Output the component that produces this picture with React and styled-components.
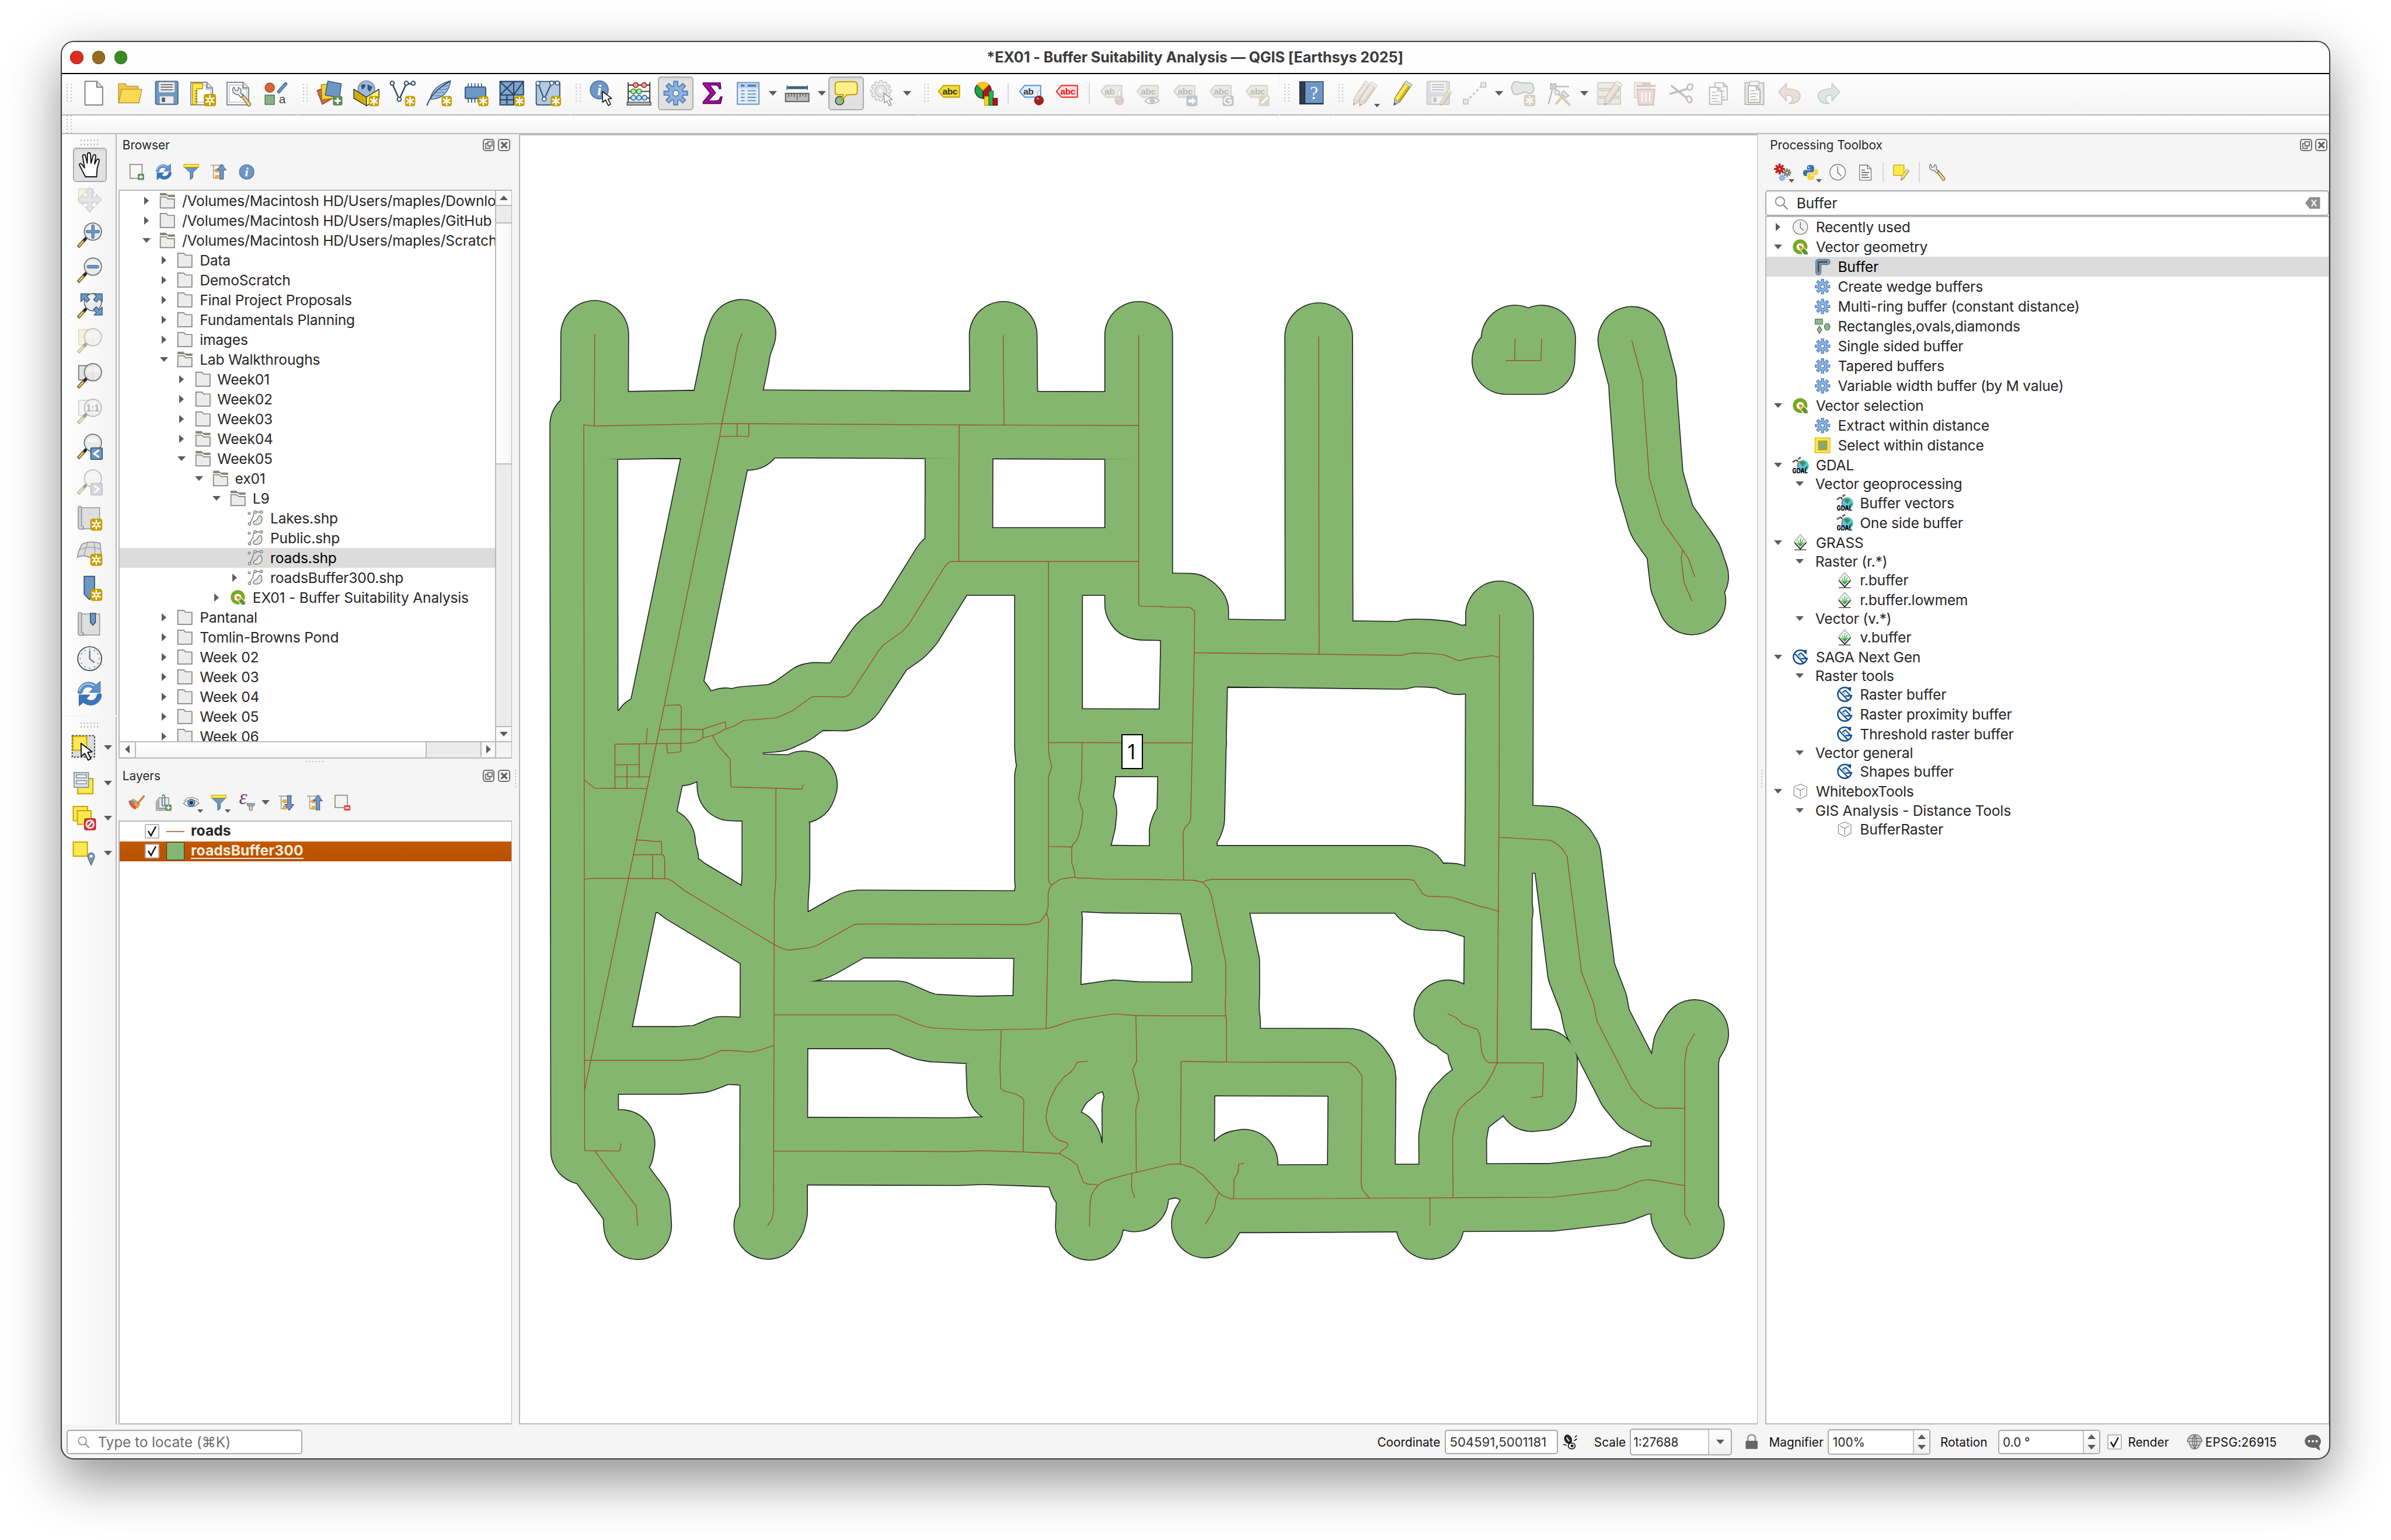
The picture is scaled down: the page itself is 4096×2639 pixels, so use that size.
import React from 'react';
import styled, { createGlobalStyle, css } from 'styled-components';

/* One unit is a tenth of a rem; the root font size ties the rem to the window width. */
const u = (n) => `${n / 10}rem`;

const C = {
  panel: '#f5f5f5',
  line: '#b9b9b9',
  ink: '#262626',
  blue: '#6d97c4',
  blueDark: '#415a75',
  yellow: '#fce94f',
  gold: '#c4a000',
  orange: '#bf5600',
};

const GlobalStyle = createGlobalStyle`
  *, *::before, *::after { box-sizing: border-box; }
  html { font-size: calc(100vw / 433.6); }
  body {
    margin: 0;
    background: #fff;
    color: ${C.ink};
    font-family: Inter, 'Liberation Sans', sans-serif;
    font-size: ${u(26)};
    letter-spacing: -0.007em;
    overflow: hidden;
  }
`;

/* ------------------------------------------------------------------ */
/* Icons, all drawn on a 24 x 24 grid                                  */
/* ------------------------------------------------------------------ */

const gear = (cx, cy, ro, ri, n, w = 0.3) => {
  const p = [];
  for (let i = 0; i < n; i++) {
    const a = (i / n) * Math.PI * 2 - Math.PI / 2;
    const s = (Math.PI * 2) / n;
    [[-s * w * 1.15, ri], [-s * w * 0.72, ro], [s * w * 0.72, ro], [s * w * 1.15, ri]].forEach(([d, r]) =>
      p.push(`${(cx + Math.cos(a + d) * r).toFixed(2)},${(cy + Math.sin(a + d) * r).toFixed(2)}`)
    );
  }
  return `M${p.join('L')}Z`;
};

const Gear = ({ cx = 12, cy = 12, ro = 10.8, ri = 6.8, n = 8, hole = 2.6, fill = '#8fb0db', stroke = '#4f7fbf', sw = 1, inner = '#fff' }) => (
  <g>
    <path d={gear(cx, cy, ro, ri, n)} fill={fill} stroke={stroke} strokeWidth={sw} strokeLinejoin="round" />
    <circle cx={cx} cy={cy} r={hole} fill={inner} stroke={stroke} strokeWidth={sw} />
  </g>
);

const spokes = (cx, cy, r, n) =>
  Array.from({ length: n }, (_, i) => {
    const a = (i / n) * Math.PI * 2 - Math.PI / 2;
    return `M${cx},${cy}L${(cx + Math.cos(a) * r).toFixed(2)},${(cy + Math.sin(a) * r).toFixed(2)}`;
  }).join('');

const Star = ({ x = 14, y = 14, s = 9.5, ring }) => {
  const cx = x + s / 2;
  const cy = y + s / 2;
  return (
    <g>
      <rect x={x} y={y} width={s} height={s} rx="1.8" fill="#c9a200" stroke="#b08f00" strokeWidth=".4" />
      <path d={spokes(cx, cy, s * 0.38, 6)} stroke="#fff" strokeWidth="1.3" strokeLinecap="round" />
      {ring && <circle cx={cx} cy={cy} r="1.6" fill="#c9a200" stroke="#fff" strokeWidth=".9" />}
    </g>
  );
};

const PlusBadge = ({ x = 15, y = 14.6, s = 8.6 }) => (
  <g>
    <rect x={x} y={y} width={s} height={s} rx="1.6" fill="#5a8c5a" />
    <path d={`M${x + s / 2},${y + s * 0.18}V${y + s * 0.82}M${x + s * 0.18},${y + s / 2}H${x + s * 0.82}`} stroke="#fff" strokeWidth={s * 0.19} />
  </g>
);

const Cursor = ({ x = 0, y = 0, k = 1 }) => (
  <path transform={`translate(${x} ${y}) scale(${k})`} d="M0,0 L.3,10.6 L3,8.2 L5.8,13.6 L8,12.4 L5.4,7.3 L9,6.8 Z" fill="#fff" stroke="#111" strokeWidth=".9" strokeLinejoin="round" />
);

const Lens = ({ back, children }) => (
  <g>
    {back}
    <path d="M8.4,14.8 L1.4,22.4" stroke="#555" strokeWidth="3" strokeLinecap="butt" />
    <path d="M6.2,17.2 L2,21.8" stroke="#f4c430" strokeWidth="1.6" />
    <path d="M9.2,13.8 L7,16.3" stroke="#222" strokeWidth="2.4" />
    <circle cx="14.9" cy="8.4" r="7.8" fill="#e6e7e7" fillOpacity=".85" stroke="#6e6e6e" strokeWidth=".9" />
    <path d="M9,7.6 A6.2,6 0 0 1 20.8,7.4 Q15,9.8 9,7.6Z" fill="#fff" opacity=".45" />
    {children}
  </g>
);

const Page = ({ x = 4, y = 1.3, w = 16, h = 21.4, f = 5.3, fill = '#fff', stroke = '#727272' }) => (
  <g fill={fill} stroke={stroke} strokeWidth=".9" strokeLinejoin="round">
    <path d={`M${x},${y}h${w - f}l${f},${f}v${h - f}h${-w}z`} />
    <path d={`M${x + w - f},${y}v${f}h${f}`} fill="#ddd" />
  </g>
);

const Pencil = ({ c1 = '#fce94f', c2 = '#c9b020', x = 0, y = 0, k = 1, tip = '#444' }) => (
  <g transform={`translate(${x} ${y}) scale(${k})`} strokeLinejoin="round">
    <path d="M15.6,1 L21,4.4 L10,20 L4.8,22.9 L5.2,17 Z" fill={c2} stroke="#857320" strokeWidth=".6" />
    <path d="M14.7,3.6 L17.6,5.3 L8,19.2 L5.4,17.2 Z" fill={c1} />
    <path d="M15.6,1 L21,4.4 L19.6,6.5 L14.2,3.2Z" fill="#d8dde0" stroke="#999" strokeWidth=".4" />
    <path d="M5.2,17 L10,20 L4.8,22.9Z" fill="#bbb" stroke="#888" strokeWidth=".4" />
    <path d="M4.9,20.6 L7,21.7 L4.8,22.9Z" fill={tip} />
  </g>
);

const textPage = (x, y, k = 1) => (
  <g transform={`translate(${x} ${y}) scale(${k})`}>
    <path d="M0,0h7.5l3.5,3.5v12h-11z" fill="#fff" stroke="#666" strokeWidth="1" />
    <path d="M7.5,0v3.5h3.5" fill="none" stroke="#666" strokeWidth="1" />
    <path d="M2,4.5h4M2,7.5h7M2,10.3h5M2,13h7" stroke="#777" strokeWidth=".9" />
  </g>
);

const Tag = ({ fill, stroke, color = '#333', txt = 'abc', x = 12.8 }) => (
  <g>
    <path d="M2.5,10.5 L7,5 H21.6 V15.6 H7Z" fill={fill} stroke={stroke} strokeWidth="1" strokeLinejoin="round" />
    <text x={x} y="13.2" textAnchor="middle" fontSize="8.2" fontWeight="600" letterSpacing="-.2" fill={color}>{txt}</text>
  </g>
);

const GreyTag = ({ txt }) => <Tag fill="#dcdccf" stroke="#aaaa9c" color="#777" txt={txt} x={txt === 'ab' ? 10.6 : 12.8} />;

const Pin = ({ color = '#a02020', x = 16.6 }) => (
  <g>
    <rect x={x - 1.1} y="9.6" width="2.2" height="6" rx="1" fill="#fff" stroke="#999" strokeWidth=".5" />
    <circle cx={x} cy="18.6" r="4.4" fill={color} />
    <ellipse cx={x - 1} cy="17" rx="1.3" ry=".9" fill="#fff" opacity=".45" />
  </g>
);

const Floppy = ({ c = C.blue, edge = '#3f5f8a' }) => (
  <g>
    <rect x="1.8" y="1.2" width="20.4" height="21" rx="1.6" fill={c} stroke={edge} strokeWidth=".8" />
    <rect x="4.8" y="2" width="14.4" height="9.2" rx=".8" fill="#eee" stroke="#aaa" strokeWidth=".5" />
    <path d="M6.5,4.3h11M6.5,6.6h11M6.5,8.9h11" stroke="#666" strokeWidth=".9" />
    <rect x="5.4" y="14.6" width="13" height="7" rx=".8" fill="#ededed" stroke="#999" strokeWidth=".6" />
    <rect x="7.5" y="16" width="3" height="4" fill={edge} />
  </g>
);

const Refresh = () => (
  <g stroke="#2d5f9e" strokeWidth=".5" strokeLinejoin="round">
    <path d="M1.3,11.2 C1.3,3.5 10.5,-1.6 17.8,4 L21.6,.9 V10.8 H11.8 L15,7.4 C10.5,4 6,6.4 5.2,11.2 C4,12.4 2.4,12.3 1.3,11.2Z" fill="#5f92cf" />
    <path d="M22.7,12.8 C22.7,20.5 13.5,25.6 6.2,20 L2.4,23.1 V13.2 H12.2 L9,16.6 C13.5,20 18,17.6 18.8,12.8 C20,11.6 21.6,11.7 22.7,12.8Z" fill="#3a75bb" />
    <path d="M2.4,9.6 C4,4 10,.8 16.2,5" fill="none" stroke="#b7d0ec" strokeWidth="1" />
  </g>
);

const Funnel = () => (
  <g>
    <path d="M2.6,5.6 H21.4 L14.2,13.2 V20 L10.6,22.8 V13.2Z" fill={C.blue} stroke={C.blueDark} strokeWidth=".8" strokeLinejoin="round" />
    <rect x="1.6" y="1.2" width="20.8" height="4.2" fill={C.yellow} stroke={C.gold} strokeWidth=".8" />
  </g>
);

const TreeMarks = () => (
  <g>
    <path d="M.6,2.6H20M4.6,2.6V20.4H9M4.6,10H9" fill="none" stroke="#999" strokeWidth="1.2" />
    <rect x="7.6" y="8" width="4" height="4" fill="#fcb34a" stroke="#f08c00" strokeWidth=".9" />
    <rect x="7.6" y="17" width="4" height="4" fill="#fcb34a" stroke="#f08c00" strokeWidth=".9" />
  </g>
);

const ClockFace = ({ fill = '#f3f3f3', stroke = '#777' }) => (
  <g fill="none" stroke={stroke} strokeWidth="1.1">
    <circle cx="12" cy="12" r="10.6" fill={fill} />
    <path d="M12,4.4V12.6L17,17" stroke="#666" />
  </g>
);

const Wrench = () => (
  <g strokeLinejoin="round">
    <path d="M11.2,10.6 L14,9.4 L23,20.4 Q22.8,23.6 20.2,23.4Z" fill="#f5d675" stroke="#5d5340" strokeWidth=".8" />
    <path d="M3.4,1 L5.2,5.2 L8.2,5 L8.6,1.6 C11.6,2.4 12.4,5.6 11.2,7.8 L14.2,11.4 L11.6,13.4 L8.6,9.8 C5,10.4 1.6,7.6 2,3.6 Z" fill="#e8ecec" stroke="#555" strokeWidth=".8" />
  </g>
);

const Sheet = ({ children }) => (
  <g>
    <path d="M1,2.2h14.6l5,5v15.4h-19.6z" fill="#fff" stroke="#777" strokeWidth=".9" />
    <path d="M3,4.6h12v4h4v11.6h-16z" fill="none" stroke="#b9cdf0" strokeWidth="1" />
    <path d="M15.6,2.2v5h5" fill="#e6e6e6" stroke="#777" strokeWidth=".9" />
    {children}
  </g>
);

const MapSheet = () => (
  <g>
    <path d="M4,3.2 H21 V22.4 H4Z" fill="#dedede" stroke="#969696" strokeWidth=".8" />
    <path d="M1.6,2.6 Q3,1 4.6,2.6 V19.6 Q6.6,20 6.4,22.6 H3 Q1.4,22.4 1.6,20Z" fill="#d2d2d2" stroke="#8f8f8f" strokeWidth=".8" />
  </g>
);

const Saga = () => (
  <g fill="none" stroke="#0f4f93" strokeWidth="2.2">
    <path d="M18.6,4.2 A10,10 0 1 0 21.8,13.8 L13,14.2" />
    <path d="M15.2,2.4L21,1.6L20.4,7.4Z" fill="#0f4f93" strokeWidth=".8" />
    <path d="M4.4,7.4 L16.4,20M8.6,9 L13,6 L21,14.2" strokeWidth="1.9" />
    <path d="M8.6,9 L12.6,9.6 L12.8,13.6Z" fill="#8fb4dc" stroke="none" />
  </g>
);

const QLogo = () => (
  <g>
    <path d="M11.4,1 A10.8,10.8 0 1 0 15.4,22 L11.8,17.3 A5.4,5.4 0 1 1 17.2,12.2 L21.4,16.2 A10.8,10.8 0 0 0 11.4,1Z" fill="#76a823" />
    <path d="M11,11 L15.6,11.6 L22.6,19.6 V23 H18 L11.6,15.6Z" fill="#589632" />
    <path d="M10.4,10.4 L15.2,11.2 L17.4,13.8 L13.6,17.4 L11.2,14.8Z" fill="#f0d040" />
    <path d="M9.8,9.8 L14.2,10.8 L14.4,13.2 L12.4,14.6 L10.6,13.8Z" fill="#ee7913" />
  </g>
);

const Gdal = () => (
  <g>
    <circle cx="15.6" cy="13" r="8.8" fill="#5fc1e8" />
    <path d="M11,8 Q15,4.4 18.6,7.4 Q21,10.4 18,10.8 L16.6,14 L13.4,12Z" fill="#2f9e44" />
    <path d="M19,14 L23.4,13 Q23.4,17 20.6,18Z" fill="#2f9e44" />
    <path d="M8.6,6 V15 M9,7 L16,9.4" stroke="#d03030" strokeWidth=".8" fill="none" />
    <path d="M.8,7.6 L5.2,4.6 M8.6,3.2 L12.6,.6" stroke="#666" strokeWidth="2.6" />
    <path d="M5,3.4 L9,5.4 L7,7.2Z" fill="#111" />
    <text x="11.6" y="23.6" textAnchor="middle" fontSize="9.4" fontWeight="800" fill="#000" textLength="22.4" lengthAdjust="spacingAndGlyphs">GDAL</text>
  </g>
);

const Grass = () => (
  <g fill="none">
    <path d="M12,.8 L20.8,11 L12,20.6 L3.2,11Z" fill="#fff" stroke="#555" strokeWidth=".7" />
    <path d="M12,3 L18.8,11 L12,18.4 L5.2,11Z" stroke="#999" strokeWidth=".5" />
    <path d="M3.2,12.4 L12,22 L20.8,12.4" stroke="#000" strokeWidth="1.1" />
    <path d="M3.4,23H20.6" stroke="#000" strokeWidth=".9" />
    <path d="M12,17.6 L12.3,6 M11.8,17.4 L8.6,9 M12.1,17.4 L15.6,8.4 M11.6,17 L7,12.6 M12.4,17 L17.2,12" stroke="#24a52a" strokeWidth="1.1" />
  </g>
);

const Cube = () => (
  <path d="M12,1.4 L21.2,5.4 V17.6 L12,22.8 L2.8,17.6 V5.4Z M5.4,7.2 L12,10.6 L18.4,7.2 M12,10.6 V20" fill="none" stroke="#777" strokeWidth=".9" strokeLinejoin="round" />
);

const FolderShape = ({ open }) => (
  <g fill="#ececec" stroke="#85857f" strokeWidth="1.5">
    {open ? (
      <g>
        <path d="M.8,.6 H9.6 L12,3.2 H23.4 V6.8 H14.2 L11.4,4.4 H.8Z" fill="#85857f" stroke="none" />
        <path d="M1.4,6.6 H10.2 L13,9.6 H22.6 V23.2 H1.4Z" />
      </g>
    ) : (
      <path d="M1.4,1.6 H10.4 L13,4.6 H22.6 V22.6 H1.4Z" />
    )}
  </g>
);

const YellowSq = ({ x, y, s }) => <rect x={x} y={y} width={s} height={s} fill={C.yellow} stroke={C.gold} strokeWidth="1" />;

const icons = {
  newFile: <Page />,
  openFile: (
    <g stroke="#b0943a" strokeWidth=".7" strokeLinejoin="round">
      <path d="M1.6,3.4 H8 L9,5.6 H19.4 V20.6 H1.6Z" fill="#f0c84a" />
      <path d="M4.4,8.4 H22.8 L20.2,20.8 H1.8Z" fill="#fcd94f" />
    </g>
  ),
  save: <Floppy />,
  newLayout: (
    <Sheet>
      <path d="M2.6,3 H11.6 V8 H6.4 V22.2 H2.6Z" fill={C.yellow} stroke={C.gold} strokeWidth=".9" />
      <path d="M4.6,10h1.8M4.6,12.4h1.8M4.6,14.8h1.8M4.6,17.2h1.8M4.6,19.6h1.8" stroke="#6d5c00" strokeWidth=".7" />
      <Star x={13} y={13} s={10.6} ring />
    </Sheet>
  ),
  layoutManager: (
    <Sheet>
      <g transform="translate(4.6 5.6) scale(.78)"><Wrench /></g>
    </Sheet>
  ),
  styleManager: (
    <g>
      <circle cx="6.4" cy="7" r="4.3" fill="#d3653a" stroke="#a44520" strokeWidth=".6" />
      <path d="M14.6,10.6 L20.8,3.6" stroke="#34567c" strokeWidth="3" strokeLinecap="round" />
      <path d="M14.6,10.6 L20.8,3.6" stroke={C.blue} strokeWidth="1.8" strokeLinecap="round" />
      <rect x="2.2" y="13.8" width="8.4" height="8.4" fill="#8bb08b" stroke="#3f7d43" strokeWidth=".8" />
      <text x="17.8" y="21" textAnchor="middle" fontSize="11" fill="#444">a</text>
    </g>
  ),
  dataSource: (
    <g strokeLinejoin="round">
      <path d="M.6,9.6 L10,6 L16,16 L5.4,22.2Z" fill="#cf6b3a" stroke="#8c4520" strokeWidth=".7" />
      <path d="M4.4,4.4 L14.4,2.8 L17,16.6 L5,18Z" fill="#f4d03a" stroke="#8f7a10" strokeWidth=".7" />
      <path d="M10.4,1 L22.6,3.4 L21,16 L8,13.8Z" fill={C.blue} stroke={C.blueDark} strokeWidth=".8" />
      <PlusBadge />
    </g>
  ),
  geopackage: (
    <g strokeLinejoin="round">
      <circle cx="12" cy="8.4" r="7.6" fill="#9db9db" stroke="#50749e" strokeWidth=".6" />
      <path d="M7,5 Q10,2.6 11.4,5 L9.6,8 L8,8.6Z M13,4 L17.6,6.4 L15,11 L13,8.4Z" fill="#35567c" />
      <path d="M.6,8.4 L12,15.6 V23.4 L.6,16.6Z" fill="#d4ac10" stroke="#222" strokeWidth=".7" />
      <path d="M23.4,8.4 L12,15.6 V23.4 L23.4,16.6Z" fill="#fdf76a" stroke="#222" strokeWidth=".7" />
      <Star x={14.4} y={14.8} s={8.8} />
    </g>
  ),
  newShape: (
    <g>
      <path d="M2.6,3.4 L9,17.6 L15.4,3.4 H22" fill="none" stroke="#2f4a66" strokeWidth="1.3" />
      {[[2.6, 3], [9, 17.6], [15.4, 3], [21.6, 3]].map(([x, y]) => (
        <circle key={x} cx={x} cy={y} r="1.8" fill="#fff" stroke="#2f4a66" strokeWidth="1" />
      ))}
      <Star x={14.4} y={14.8} s={8.8} />
    </g>
  ),
  newSpatialite: (
    <g>
      <path d="M22.6,.8 C12,3.6 5,10 4.4,17.4 C13,17.4 21,13 22.6,.8Z" fill="#a9c3e2" stroke="#3d5f8a" strokeWidth=".8" />
      <path d="M1.2,23.2 C4,15 12,7 22.4,1" fill="none" stroke="#2c4a70" strokeWidth="1.1" />
      <path d="M8,14.6 L14,14M10,11.8 L17,11M12.6,9 L19.6,8M15.6,6.2 L21,5" stroke="#5b83b4" strokeWidth=".8" />
      <Star x={14.8} y={14.8} s={8.8} />
    </g>
  ),
  newVirtual: (
    <g>
      <path d="M5.4,3V20.6M8.4,3V20.6M11.4,3V20.6M14.4,3V20.6M17.4,3V10" stroke="#46607e" strokeWidth="1" />
      <rect x="2.6" y="6.4" width="18.6" height="10.4" rx="1" fill={C.blue} stroke="#34567c" strokeWidth="1" />
      <Star x={14.6} y={14.8} s={8.8} />
    </g>
  ),
  newMesh: (
    <g stroke="#27435f" strokeWidth="1.1">
      <path d="M1.4,1.4H22.6V13.6H13.8V22.6H1.4Z" fill="#7ea4d0" />
      <path d="M1.4,13.6H13.8V1.4M1.4,1.4L13.8,13.6L22.6,1.4M1.4,13.6L13.8,1.4M7.6,13.6V22.6M1.4,18H13.8" fill="none" />
      <Star x={14.6} y={14.8} s={8.8} />
    </g>
  ),
  newGpx: (
    <g>
      <rect x="1.4" y="1.4" width="21.4" height="21.2" rx="1.6" fill="#b4c9e2" stroke="#34567c" strokeWidth="1" />
      <path d="M3,3 L8.6,17.4 L15.2,3 H21" fill="none" stroke="#3b5879" strokeWidth="1.2" />
      {[[3, 3], [8.6, 17.4], [15.4, 2.8], [20.6, 2.8]].map(([x, y]) => (
        <circle key={x} cx={x} cy={y} r="1.8" fill="#fff" stroke="#3b5879" strokeWidth=".9" />
      ))}
      <Star x={14.8} y={14.8} s={8.8} />
    </g>
  ),
  identify: (
    <g>
      <circle cx="8.8" cy="9" r="8.2" fill={C.blue} stroke="#47699a" strokeWidth=".8" />
      <text x="8.9" y="13.6" textAnchor="middle" fontSize="13.5" fontStyle="italic" fontWeight="700" fontFamily="'Liberation Serif', serif" fill="#fff">i</text>
      <Cursor x={11.6} y={10.4} k={0.94} />
    </g>
  ),
  abacus: (
    <g>
      <path d="M2.2,2V21M21.8,2V21M2.2,4.6H21.8M2.2,10.4H21.8M2.2,16.4H21.8" stroke="#333" strokeWidth="1" />
      {[[9, 4.6, '#f4a4a4', '#b01818'], [16.6, 4.6, '#f4a4a4', '#b01818'], [7, 10.4, '#b6e8b0', '#2e8b2e'], [12, 10.4, '#b6e8b0', '#2e8b2e'], [7, 16.2, '#bfe0f6', '#2f6d9c'], [12, 16.2, '#bfe0f6', '#2f6d9c'], [17, 16.2, '#bfe0f6', '#2f6d9c']].map(([x, y, f, s]) => (
        <circle key={`${x}-${y}`} cx={x} cy={y} r="2.2" fill={f} stroke={s} strokeWidth=".9" />
      ))}
      <rect x="1.2" y="20.2" width="21.6" height="2.6" fill="#b5b5b5" stroke="#444" strokeWidth=".7" />
    </g>
  ),
  gear: <Gear />,
  sigma: (
    <path d="M4,2.6H19.6L20,8H18.6C18,5.2 17,4.6 14.4,4.6H9.8L15.2,11.6L8.6,19H15.4C18,19 19,18 19.8,15.4H21.2L19.8,21.4H4V20L10.6,12L4,4Z" fill="#a808a8" stroke="#4a054a" strokeWidth=".8" />
  ),
  table: (
    <g>
      <rect x="2.2" y="2.4" width="19.6" height="19.6" fill="#e4eef8" stroke={C.blue} strokeWidth="1.1" />
      <rect x="2.8" y="3" width="18.4" height="4.6" fill="#bcd3ec" />
      <path d="M5.4,5.2h3.4M11.4,5.2h7.8" stroke="#4a7db5" strokeWidth="1.8" />
      <path d="M5.4,9.8h3.4M11.4,9.8h7.8M5.4,12.8h3.4M11.4,12.8h7.8M5.4,15.8h3.4M11.4,15.8h7.8M5.4,18.8h3.4M11.4,18.8h7.8" stroke={C.blue} strokeWidth="1.1" />
    </g>
  ),
  measure: (
    <g>
      <path d="M2.8,5V9M21.2,5V9M3,7H21" stroke="#44607e" strokeWidth="1" />
      <path d="M3.6,7H20.4" stroke="#44607e" strokeWidth="2.6" />
      <rect x="1.4" y="12.2" width="21.2" height="7.4" fill="#bcbcbc" stroke="#5e5e5e" strokeWidth="1" />
      <path d="M4.4,12.6v3M7,12.6v2.4M9.4,12.6v3M12,12.6v5.6M14.6,12.6v3M17.2,12.6v2.4M19.8,12.6v3" stroke="#5e5e5e" strokeWidth=".8" />
    </g>
  ),
  mapTip: (
    <g>
      <circle cx="6" cy="18.8" r="3.8" fill="#8dbf8b" stroke="#444" strokeWidth=".9" />
      <path d="M5,1.6H19Q22,1.6 22,4.6V10.4Q22,13.4 19,13.4H12.8L7.4,18.8L9.4,13.4H5Q2,13.4 2,10.4V4.6Q2,1.6 5,1.6Z" fill="#fff08a" stroke={C.gold} strokeWidth="1.1" strokeLinejoin="round" />
    </g>
  ),
  runAction: (
    <g opacity=".42">
      <Gear cx={10.6} cy={10} ro={9.4} ri={7.6} n={12} hole={5.4} fill="#e4e4e4" stroke="#777" inner="#c4cbd2" sw={0.8} />
      <path d="M8.6,7V13L13.4,10Z" fill="#fff" stroke="#999" strokeWidth=".4" />
      <Cursor x={13.4} y={12} k={0.84} />
    </g>
  ),
  label: <Tag fill="#f2dc32" stroke={C.gold} />,
  diagram: (
    <g>
      <path d="M9.6,9.4 L4.4,4.2 A7.4,7.4 0 0 0 9.6,16.8Z" fill="#1aa34a" stroke="#2a2a2a" strokeWidth=".7" />
      <path d="M9.6,9.4 L14.8,4.2 A7.4,7.4 0 0 1 9.6,16.8Z" fill="#b41414" stroke="#2a2a2a" strokeWidth=".7" />
      <path d="M9.6,9.4 L4.4,4.2 A7.4,7.4 0 0 1 14.8,4.2Z" fill="#fbc91c" stroke="#ee9c10" strokeWidth=".7" />
      <rect x="11" y="15" width="4" height="8" fill="#ffd21c" stroke="#e08c00" strokeWidth=".6" />
      <rect x="14.8" y="10" width="4" height="13" fill="#22b455" stroke="#0c6a2c" strokeWidth=".6" />
      <rect x="18.6" y="16.6" width="4" height="6.4" fill="#b41414" stroke="#700" strokeWidth=".6" />
    </g>
  ),
  labelPin: (
    <g>
      <Tag fill="#e3f0ff" stroke="#4f93ea" txt="ab" x={10.4} />
      <Pin x={20} />
    </g>
  ),
  labelRed: <Tag fill="#ffe1e1" stroke="#ff1a1a" color="#f01414" />,
  gPin: <g opacity=".5"><GreyTag txt="ab" /><Pin color="#b9a2a2" x={19.4} /></g>,
  gEye: (
    <g opacity=".5">
      <GreyTag txt="abc" />
      <path d="M9.6,19.4 Q16,13 22.8,18.6 Q16.4,24 9.6,19.4Z" fill="#fff" stroke="#777" strokeWidth=".9" />
      <circle cx="16.4" cy="18.8" r="2.4" fill="#8c98a6" />
    </g>
  ),
  gMove: (
    <g opacity=".5">
      <GreyTag txt="abc" />
      <rect x="14" y="14" width="10" height="9.8" rx="1.6" fill="#8f969e" />
      <path d="M15.8,17.6h3.4v-2l3.6,3.4l-3.6,3.4v-2h-3.4z" fill="#fff" />
    </g>
  ),
  gRotate: (
    <g opacity=".5">
      <GreyTag txt="abc" />
      <rect x="14" y="14" width="10" height="9.8" rx="1.6" fill="#8f969e" />
      <path d="M21,16.4 A3.2,3.2 0 1 0 20.6,21.4 M18.6,18.6h3v3" fill="none" stroke="#fff" strokeWidth="1.4" />
    </g>
  ),
  gEdit: (
    <g opacity=".5">
      <GreyTag txt="abc" />
      <rect x="14" y="14" width="9.8" height="9.8" rx="1.6" fill="#bdb89a" />
      <path d="M16,22l.8-2.6l5-4.4l1,1.2l-4.8,4.8z" fill="#fff" />
    </g>
  ),
  help: (
    <g>
      <rect x="1" y="1.2" width="22" height="21" fill="#1d2733" />
      <rect x="6.4" y="1.8" width="16" height="19.2" fill={C.blue} />
      <rect x="1.8" y="1.8" width="4" height="19.6" fill="#2d3c4c" />
      <text x="14.4" y="17.4" textAnchor="middle" fontSize="16.5" fontFamily="'Liberation Serif', serif" fill="#fff">?</text>
    </g>
  ),
  pencils: (
    <g opacity=".42">
      <Pencil c1="#dccbc4" c2="#aaa09a" x={-4} />
      <Pencil c1="#dccbc4" c2="#aaa09a" x={1.5} y={0.6} />
    </g>
  ),
  pencil: <Pencil />,
  saveEdits: <g opacity=".42"><Floppy c="#b4b8be" edge="#7a7f86" /><g transform="translate(11 8) scale(.66)"><Pencil c1="#d0b4a6" c2="#a08878" /></g></g>,
  digitize: (
    <g opacity=".35" stroke="#666">
      <path d="M4,19.6 L19.6,4" strokeWidth="1.5" strokeDasharray="2.6 1.8" />
      <rect x="1.6" y="17.6" width="4.2" height="4.2" fill="#ccc" strokeWidth="1" />
      <rect x="17.6" y="2.4" width="4.2" height="4.2" fill="#ccc" strokeWidth="1" />
    </g>
  ),
  addPolygon: (
    <g opacity=".4">
      <path d="M3,12.4 C-.6,6 2,0 8,2 C13,4.4 18,.8 20.4,4 C22,8 22,12.6 17,12.2 C11,8.6 8,15.6 3,12.4Z" fill="#c0ccc0" stroke="#6d6d6d" strokeWidth="1.1" />
      <rect x="12.6" y="13.4" width="10.2" height="10.4" rx="1.6" fill="#a09870" />
      <path d={spokes(17.7, 18.6, 4, 6)} stroke="#fff" strokeWidth="1.3" />
    </g>
  ),
  vertexTool: (
    <g opacity=".4" stroke="#555">
      <path d="M5.6,6 L1.4,22M6,6H20" strokeWidth="1.2" fill="none" />
      <rect x="3.4" y="3.6" width="4.6" height="4.6" fill="#fff" strokeWidth="1.1" />
      <path d="M3.4,3.6l4.6,4.6M8,3.6l-4.6,4.6" strokeWidth=".9" />
      <path d="M8,22 L17,11.4" stroke="#a08c50" strokeWidth="2.2" />
      <path d="M9,11 L21,23" stroke="#a08c50" strokeWidth="2.2" />
      <path d="M15,9.6 L20,14.4 L17,16 L13,12Z" fill="#ccc" strokeWidth=".8" />
      <circle cx="9.2" cy="11.4" r="2.2" fill="#ccc" strokeWidth=".8" />
    </g>
  ),
  editAttrs: (
    <g opacity=".42">
      {[2.4, 9.4, 16.4].map((y) => <rect key={y} x="1.6" y={y} width="20.6" height="5.6" fill="#dbd7c6" stroke="#8f8b74" strokeWidth=".9" />)}
      <Pencil c1="#dccbc4" c2="#aaa09a" x={3} />
    </g>
  ),
  trash: (
    <g opacity=".36">
      <rect x="2" y="2.4" width="14.4" height="13.6" fill="#e2decb" stroke="#a09a78" strokeWidth=".9" />
      <path d="M4.4,8.4H20.6L19.2,22.8H5.8Z" fill="#cfa0a0" stroke="#946060" strokeWidth="1" />
      <path d="M3.8,5.4H21.4M9,3.4H16" stroke="#a86a6a" strokeWidth="1.9" />
      <path d="M9,11v9M12.5,11v9M16,11v9" stroke="#fff" strokeWidth="1.4" />
    </g>
  ),
  scissors: (
    <g opacity=".45" fill="none">
      <path d="M2.4,5 L16.6,16.2M1.2,12.8 L17,8.2" stroke="#777" strokeWidth="1.8" />
      <ellipse cx="19.6" cy="6.4" rx="2.4" ry="2.8" transform="rotate(30 19.6 6.4)" stroke="#8c6f6f" strokeWidth="1.4" />
      <ellipse cx="19" cy="17.6" rx="2.2" ry="3" transform="rotate(-24 19 17.6)" stroke="#8c6f6f" strokeWidth="1.4" />
    </g>
  ),
  copy: <g opacity=".42">{textPage(9, 2.6)}{textPage(4, 6.6)}</g>,
  paste: (
    <g opacity=".5">
      <rect x="3.4" y="2.6" width="17" height="19.6" fill="#ddd8c8" stroke="#777" strokeWidth="1" />
      <rect x="7.4" y="1.2" width="8.6" height="4" fill="#eee" stroke="#888" strokeWidth=".8" />
      {textPage(6.4, 5.4, 0.96)}
    </g>
  ),
  undo: <path opacity=".4" d="M8,3 L1,11 L8,19 V14 Q14.4,13 13.4,18.6 Q12.4,21 10.4,21.4 Q19.8,22 20.6,14.4 Q20.4,8.4 8,8Z" fill="#d3b8a8" stroke="#8a7a70" strokeWidth=".8" strokeLinejoin="round" />,
  redo: <path opacity=".4" d="M16,3 L23,11 L16,19 V14 Q9.6,13 10.6,18.6 Q11.6,21 13.6,21.4 Q4.2,22 3.4,14.4 Q3.6,8.4 16,8Z" fill="#b9c8bb" stroke="#70807a" strokeWidth=".8" strokeLinejoin="round" />,

  pan: (
    <path transform="translate(0 1)" d="M8.2,21.8 L5.4,16.4 L2.8,11.4 C2.2,9.8 3.8,9.2 4.8,10.4 L7.4,13.6 L5.6,3.4 C5.4,1.4 7.8,1 8.2,3 L9.8,9.4 L10,1.4 C10,-.6 12.6,-.6 12.7,1.4 L13.2,9.4 L15,2.8 C15.6,1 17.8,1.6 17.4,3.4 L16.4,10.2 L18.4,6.4 C19.2,5 21,5.8 20.6,7.4 L18.8,14 L18.2,21.8Z" fill="#fff" stroke="#111" strokeWidth="1" strokeLinejoin="round" />
  ),
  panSelection: (
    <g opacity=".4">
      <rect x="2" y="2" width="13" height="13" fill="#efe9c4" stroke="#b3a96a" strokeWidth=".8" />
      <path d="M12,.8l4,4.4h-2.4v4.4h4.4v-2.6l4.8,4.6l-4.8,4.6v-2.4h-4.4v4.6h2.4l-4,4.6l-4-4.6h2.4v-4.6h-4.4v2.4l-4.8-4.6l4.8-4.6v2.6h4.4v-4.4h-2.4z" fill="#c9ccd1" stroke="#888" strokeWidth=".7" />
    </g>
  ),
  zoomIn: <Lens><path d="M14.9,3.4V13.4M9.9,8.4H19.9" stroke="#3d6696" strokeWidth="2.8" strokeLinecap="round" /><path d="M14.9,3.4V13.4M9.9,8.4H19.9" stroke={C.blue} strokeWidth="1.8" strokeLinecap="round" /></Lens>,
  zoomOut: <Lens><rect x="9.6" y="7.2" width="10.6" height="2.6" rx="1" fill={C.blue} stroke="#3d6696" strokeWidth=".5" /></Lens>,
  zoomFull: (
    <Lens>
      <g fill={C.blue} stroke="#3d5878" strokeWidth=".7" strokeLinejoin="round">
        <path d="M4,.8H11.4L9.4,3L12,6L9.4,8.4L6.8,5.4L4,8Z" />
        <path d="M23.4,.8H16L18,3L15.4,6L18,8.4L20.6,5.4L23.4,8Z" />
        <path d="M23.4,20H16L18,17.8L15.4,14.8L18,12.4L20.6,15.4L23.4,12.8Z" />
      </g>
    </Lens>
  ),
  zoomSelection: <g opacity=".42"><Lens back={<rect x="2" y="1.6" width="13" height="13.6" fill="#efe9b4" stroke="#b3a96a" strokeWidth=".8" />} /></g>,
  zoomLayer: <Lens back={<rect x="2" y="2.4" width="13" height="13" fill="#e2e2e2" stroke="#777" strokeWidth=".9" />} />,
  zoomNative: (
    <g opacity=".45">
      <Lens back={<rect x="2" y="1.6" width="13" height="13.6" fill="#eee" stroke="#999" strokeWidth=".8" />}>
        <text x="14.8" y="11.4" textAnchor="middle" fontSize="8.4" fontWeight="700" fill="#555">1:1</text>
      </Lens>
    </g>
  ),
  zoomLast: <Lens><rect x="13" y="13" width="10.4" height="10.4" rx="1" fill={C.blue} stroke="#2c4a6c" strokeWidth=".8" /><path d="M20.4,15L16,18.2L20.4,21.4" fill="none" stroke="#fff" strokeWidth="1.7" /></Lens>,
  zoomNext: <g opacity=".42"><Lens><rect x="13" y="13" width="10.4" height="10.4" rx="1" fill="#9fa9b5" stroke="#717b88" strokeWidth=".8" /><path d="M16,15L20.4,18.2L16,21.4" fill="none" stroke="#fff" strokeWidth="1.7" /></Lens></g>,
  newMap: <g><MapSheet /><Star x={12.8} y={13.4} s={10.4} ring /></g>,
  new3d: (
    <g>
      <path d="M5.8,3.6 Q12,.6 21.4,3 L22.6,14 Q15,13.6 12,16 Q6,13 .8,16 Q2,8 5.8,3.6Z" fill="#dcdcdc" stroke="#8f8f8f" strokeWidth=".8" />
      <path d="M3.4,9 Q11,5 22,8.4M10.4,2 Q8,8 7,14M16,2 Q17,8 16.6,14" fill="none" stroke="#9c9c9c" strokeWidth=".7" />
      <Star x={12.8} y={13} s={10.4} ring />
    </g>
  ),
  newBookmark: <g><path d="M7,1.4H16.4V17.6L11.7,22.4L7,17.6Z" fill={C.blue} stroke="#2f4d70" strokeWidth=".9" /><Star x={12.8} y={13} s={10.4} ring /></g>,
  bookmarks: <g><MapSheet /><path d="M12.6,2.6H17.2V10.8L14.9,13.4L12.6,10.8Z" fill={C.blue} stroke="#2f4d70" strokeWidth=".8" /></g>,
  temporal: (
    <g>
      <circle cx="12" cy="12" r="10.8" fill="#f1f1f1" stroke="#444" strokeWidth=".9" />
      {Array.from({ length: 12 }, (_, i) => (
        <circle key={i} cx={12 + 8.6 * Math.sin((i * Math.PI) / 6)} cy={12 - 8.6 * Math.cos((i * Math.PI) / 6)} r=".6" fill="#4f7fbf" />
      ))}
      <path d="M12,4.6V12.2L16.4,15.6" fill="none" stroke="#6e6e6e" strokeWidth="1.2" />
    </g>
  ),
  refresh: <Refresh />,
  select: (
    <g>
      <rect x="1.4" y="1.4" width="20.4" height="19.4" fill="#dcdcdc" stroke="#333" strokeWidth=".9" strokeDasharray="1.8 1.2" />
      <YellowSq x={2} y={2} s={12.6} />
      <Cursor x={9.4} y={8.4} k={1.12} />
    </g>
  ),
  selectValue: (
    <g>
      <YellowSq x={6.4} y={8} s={13.8} />
      <rect x="3.2" y="2.6" width="13" height="13.4" fill="#dfe6ec" stroke="#8794a2" strokeWidth="1" />
      <rect x="5.2" y="4.6" width="9" height="2.8" fill="#fff" stroke="#8794a2" strokeWidth=".9" />
      <rect x="5.2" y="10" width="9" height="2.8" fill="#fff" stroke="#8794a2" strokeWidth=".9" />
    </g>
  ),
  deselect: (
    <g>
      <YellowSq x={2.4} y={1.6} s={13} />
      <YellowSq x={6.2} y={5.4} s={12.4} />
      <rect x="12.6" y="12.6" width="10" height="10.2" rx="1.6" fill="#e03a3a" stroke="#a81818" strokeWidth=".7" />
      <circle cx="17.6" cy="17.7" r="3.4" fill="#e03a3a" stroke="#fff" strokeWidth="1.3" />
      <path d="M15.3,20L19.9,15.4" stroke="#fff" strokeWidth="1.3" />
    </g>
  ),
  selectLocation: (
    <g>
      <YellowSq x={2.4} y={1.6} s={12.8} />
      <path d="M18.6,22.6 L15.6,15.6 A3.1,3.4 0 1 1 21.6,15.6Z" fill="#7b98ae" stroke="#4d6a80" strokeWidth=".7" />
      <circle cx="18.6" cy="14.4" r="1.3" fill="#fff" />
    </g>
  ),

  addItem: <g><rect x="3" y="1.4" width="17" height="19.6" fill="#f7f7f7" stroke="#85857f" strokeWidth="1.3" /><PlusBadge x={14} y={14.6} s={8.8} /></g>,
  filter: <Funnel />,
  collapse: <g><TreeMarks /><path d="M16,1.2L22.4,9.4H18.6V22H13.4V9.4H9.6Z" fill={C.blue} stroke="#3a587c" strokeWidth=".9" strokeLinejoin="round" /></g>,
  expand: <g><TreeMarks /><path d="M16,22.6L22.4,14.4H18.6V1.8H13.4V14.4H9.6Z" fill={C.blue} stroke="#3a587c" strokeWidth=".9" strokeLinejoin="round" /></g>,
  info: (
    <g>
      <circle cx="12" cy="12" r="10.2" fill={C.blue} stroke="#47699a" strokeWidth=".9" />
      <text x="12" y="18.4" textAnchor="middle" fontSize="18" fontStyle="italic" fontWeight="700" fontFamily="'Liberation Serif', serif" fill="#fff">i</text>
    </g>
  ),
  styling: (
    <g>
      <path d="M1,9.4 L9,6 L17,14 L10.4,21.6 Q3,18 1,9.4Z" fill="#f6c945" />
      <path d="M1,10 L4,8.6 L12,19.4 L10.4,21.6 Q3,18 1,10Z" fill="#e8503c" />
      <path d="M3.6,9 L8,6.6 L10,11 L7.4,14Z" fill="#6aa2e0" />
      <path d="M11,9 L17,14 L13.4,19.4 L7.6,14.6Z" fill="#e0a05a" stroke="#b0682c" strokeWidth=".7" />
      <path d="M14.4,12.2 L22.4,3" stroke="#a4631f" strokeWidth="2.8" strokeLinecap="round" />
      <path d="M14.4,12.2 L22.4,3" stroke="#dba14e" strokeWidth="1.4" strokeLinecap="round" />
    </g>
  ),
  addGroup: (
    <g>
      <rect x="5" y="5" width="14" height="14.6" fill="#e9e9e9" stroke="#85857f" strokeWidth="1.1" />
      <path d="M1.4,9V22.6H14M3.2,7V20.8H14" fill="none" stroke="#85857f" strokeWidth="1.1" />
      <path d="M9.6,5V14.4Q9.6,16.6 11.6,16.4Q13.6,16.2 13.4,14V3.4Q13.2,1 11.6,1Q10,1 10,3.4" fill="none" stroke="#4a6d95" strokeWidth="1.3" />
      <PlusBadge x={14} y={14.6} s={8.8} />
    </g>
  ),
  eye: (
    <g>
      <path d="M1,13 Q11,3 23,12.6 Q12,22 1,13Z" fill="#fff" stroke="#8a8a8a" strokeWidth="1.1" />
      <circle cx="12" cy="12" r="5.2" fill="#6d97c4" stroke="#34567c" strokeWidth=".8" />
      <circle cx="12" cy="12" r="2.3" fill="#1c2c40" />
      <path d="M1.6,9.6 Q11,-.4 22.6,8.8" fill="none" stroke="#8a8a8a" strokeWidth="1.1" />
    </g>
  ),
  expression: (
    <g>
      <text x="7" y="14" textAnchor="middle" fontSize="29" fontStyle="italic" fontFamily="'Liberation Serif', serif" fill="#6e3a72">ε</text>
      <path d="M12.4,13H23V15.4L19.8,18.4V22.6H15.6V18.4L12.4,15.4Z" fill="#a0a0a0" stroke="#777" strokeWidth=".7" />
      <path d="M17.7,17V22.2" stroke="#fff" strokeWidth="1.2" />
    </g>
  ),
  removeLayer: <g><rect x="1.6" y="1.4" width="17.4" height="17.4" fill="#f4f4f4" stroke="#85857f" strokeWidth="1.3" /><rect x="14" y="15.4" width="9.2" height="7.6" rx="1.4" fill="#ee4b4b" /><path d="M15.8,19.2H21.4" stroke="#fff" strokeWidth="1.8" /></g>,
  models: (
    <g>
      <Gear cx={7.6} cy={7.6} ro={7.2} ri={4.4} n={8} hole={1.4} fill="#cf1f1f" stroke="#a81515" sw={0.5} />
      <Gear cx={17.8} cy={12.6} ro={5.6} ri={3.6} n={8} hole={1.4} fill="#7d7d7d" stroke="#666" sw={0.4} />
      <Gear cx={11.2} cy={19.6} ro={4.4} ri={2.8} n={8} hole={1} fill="#8fb0db" stroke="#6d97c4" sw={0.4} />
    </g>
  ),
  python: (
    <g>
      <path d="M12,1.4 C7.6,1.4 7,3 7,5 V7.6 H12.6 V8.4 H4.6 C2.4,8.4 1.4,10.4 1.4,12.8 C1.4,15.6 2.6,17 4.6,17 H6.8 V14.4 C6.8,12.6 8,11.6 9.8,11.6 H14.4 C16,11.6 17,10.6 17,9 V5 C17,2.6 15.4,1.4 12,1.4Z" fill="#3a73a5" />
      <circle cx="9.4" cy="4.6" r="1" fill="#fff" />
      <path d="M12.2,22.6 C16.6,22.6 17.2,21 17.2,19 V16.4 H11.6 V15.6 H19.6 C21.8,15.6 22.6,13.8 22.6,11.4 C22.6,8.8 21.4,7 19.4,7 H18 V9.8 C18,11.4 16.4,12.6 14.6,12.6 H10 C8.4,12.6 7.4,13.6 7.4,15.2 V19 C7.4,21.4 8.8,22.6 12.2,22.6Z" fill="#fcd04a" />
    </g>
  ),
  history: <ClockFace fill="#fafafa" />,
  results: (
    <g fill="none" stroke="#777" strokeWidth="1.1">
      <path d="M3.8,1.4H14.6L20,6.8V22.6H3.8Z" fill="#fcfcfc" />
      <path d="M14.6,1.4V6.8H20" />
      <path d="M6.4,8.6h5M6.4,12h11M6.4,15.4h9M6.4,18.8h11" strokeWidth="1.3" stroke="#555" />
    </g>
  ),
  editInPlace: <g><YellowSq x={1.6} y={1.4} s={14.6} /><g transform="translate(8.4 6) scale(.74)"><Pencil c1="#f6dc84" c2="#d3b45e" /></g></g>,
  wrench: <Wrench />,
  clock: <ClockFace />,
  qgis: <QLogo />,
  gdal: <Gdal />,
  grass: <Grass />,
  saga: <Saga />,
  cube: <Cube />,
  folder: <FolderShape />,
  folderOpen: <FolderShape open />,
  shp: (
    <g fill="none" stroke="#85857f" strokeWidth="1.4">
      <path d="M3,20 C5,17 8,13 8.6,8.6 C9.2,5 11,3 13,3H20" />
      <circle cx="2.6" cy="5" r="1.5" fill="#fff" />
      <circle cx="3" cy="20.8" r="1.8" fill="#fff" />
      <circle cx="11.4" cy="3" r="1.8" fill="#fff" />
      <circle cx="20.6" cy="3" r="1.8" fill="#fff" />
      <path d="M20.6,9.4 C22.6,14 22.4,21.6 13,21.8 C6.6,21.8 8,17.4 12,15.8 C16,14 15.6,9 18.4,8.6 Q20,8.4 20.6,9.4Z" fill="#e6e6e6" />
    </g>
  ),
  buffer: (
    <g strokeLinejoin="round" strokeLinecap="round" fill="none">
      <path d="M6,20V5H19" stroke="#4f6a80" strokeWidth="8.6" />
      <path d="M6,20V5H19" stroke="#7f9bb0" strokeWidth="7" />
      <path d="M6,20V5H19" stroke="#3d4d58" strokeWidth="2.4" strokeLinecap="butt" />
    </g>
  ),
  shapes: (
    <g fill="#8bb98b" stroke="#4d5f4d" strokeWidth=".9">
      <rect x="1.4" y="1.6" width="10.6" height="7.4" />
      <ellipse cx="18.8" cy="12.8" rx="4" ry="5" />
      <path d="M7.6,11.6L11,17L7.6,22.6L4.2,17Z" />
    </g>
  ),
  selectWithin: (
    <g>
      <rect x="1.2" y="1.2" width="21.6" height="21.6" fill={C.yellow} stroke="#d8b820" strokeWidth="1.2" />
      <rect x="6" y="5.6" width="12.4" height="13" fill="#86a878" stroke={C.gold} strokeWidth="1.2" />
    </g>
  ),
  search: <g fill="none" stroke="#8c8c8c" strokeWidth="1.8"><circle cx="9.8" cy="9.6" r="7.2" /><path d="M14.8,15L22,22.4" strokeWidth="2.2" /></g>,
  extents: (
    <g stroke="#111" strokeWidth="1.5" fill="#fff">
      <ellipse cx="8.4" cy="7.6" rx="5" ry="6.6" transform="rotate(-28 8.4 7.6)" fill="#333" />
      <path d="M6,5 L10.6,11.4" stroke="#fff" strokeWidth="1.6" />
      <path d="M10,11 L16,17M1,15.4l5,1.6M19,4.4l3-2.6M17.6,10l4.6-3" fill="none" />
      <ellipse cx="14" cy="18" rx="5.4" ry="4.6" />
      <circle cx="14.6" cy="18" r="1.5" fill="#111" />
    </g>
  ),
  lock: <g><path d="M6.4,11V6.6Q6.4,1.6 12,1.6T17.6,6.6V11" fill="none" stroke="#9a9a9a" strokeWidth="2.4" /><rect x="3" y="10.6" width="18" height="12.2" rx="1" fill="#666" /></g>,
  globe: (
    <g fill="#cfcfcf" stroke="#6a6a6a" strokeWidth="1.1">
      <path d="M6.2,1.6H17.8L23.2,9.4V14L17.8,22.4H6.2L.8,14V9.4Z" stroke="none" fill="#d8d8d8" />
      <path d="M12,1.2C4.6,1.2 1,7 1,11.6H23C23,7 19.4,1.2 12,1.2Z" />
      <path d="M3.6,11.6C4,18 7.6,22.8 12,22.8S20,18 20.4,11.6M2.6,7H21.4M5,17H19M12,1.2V22.8M12,1.2Q5,11 12,22.8M12,1.2Q19,11 12,22.8" fill="none" />
    </g>
  ),
  bubble: (
    <g>
      <path d="M12,2 C5.4,2 1,6 1,11 C1,16 5.6,19.8 12,19.8 Q14.6,19.8 16,19.4 Q18,22.6 22.4,22.8 Q20.6,20 20.6,17.2 Q23,14.6 23,11 C23,6 18.6,2 12,2Z" fill="#666" />
      <g fill="#fff"><circle cx="6.8" cy="11" r="1.6" /><circle cx="12" cy="11" r="1.6" /><circle cx="17.2" cy="11" r="1.6" /></g>
    </g>
  ),
};

const Svg = styled.svg`
  display: block;
  flex: none;
  width: ${(p) => u(p.$size)};
  height: ${(p) => u(p.$size)};
  overflow: visible;
  letter-spacing: 0;
`;
const Icon = ({ name, size = 48 }) => <Svg viewBox="0 0 24 24" $size={size}>{icons[name]}</Svg>;

/* ------------------------------------------------------------------ */
/* Window                                                              */
/* ------------------------------------------------------------------ */

const Desktop = styled.div`
  width: 100vw;
  height: 100vh;
  padding: ${u(74)} 0 0 ${u(110)};
  overflow: hidden;
`;

const Window = styled.main`
  display: flex;
  flex-direction: column;
  width: ${u(4116)};
  height: ${u(2574)};
  border: 2px solid #3c3a3b;
  border-radius: ${u(24)};
  background: ${C.panel};
  overflow: hidden;
  box-shadow: 0 ${u(36)} ${u(96)} rgba(0, 0, 0, 0.44);
`;

const TitleBar = styled.header`
  display: grid;
  grid-template-columns: 1fr auto 1fr;
  align-items: center;
  flex: none;
  height: ${u(58)};
  padding: 0 ${u(15)};
  border-bottom: 2px solid #000;
  background: #fefefe;
`;
const Lights = styled.div`
  display: flex;
  gap: ${u(16)};
`;
const Light = styled.span`
  width: ${u(24)};
  height: ${u(24)};
  border-radius: 50%;
  background: ${(p) => p.$c};
  box-shadow: inset 0 0 0 1px rgba(0, 0, 0, 0.22);
`;
const WindowTitle = styled.h1`
  margin: 0 ${u(2)} 0 0;
  font-size: ${u(26.6)};
  font-weight: 700;
  letter-spacing: -0.004em;
  color: #3b3b3b;
`;

const GripV = styled.span`
  flex: none;
  width: ${u(10)};
  height: ${(p) => u(p.$len || 34)};
  background-image: linear-gradient(#bdbdbd 40%, transparent 40%);
  background-size: 100% ${u(6)};
  mask-image: linear-gradient(90deg, #000 25%, transparent 25% 68%, #000 68% 93%, transparent 93%);
`;
const GripH = styled.span`
  flex: none;
  width: ${u(34)};
  height: ${u(10)};
  background-image: linear-gradient(90deg, #bdbdbd 40%, transparent 40%);
  background-size: ${u(6)} 100%;
  mask-image: linear-gradient(#000 28%, transparent 28% 72%, #000 72%);
`;

const ToolbarRow = styled.div`
  display: flex;
  flex: none;
  gap: 1px;
  height: ${u(75)};
`;
const Toolbar = styled.div`
  display: flex;
  align-items: center;
  flex: ${(p) => (p.$w ? 'none' : '1')};
  width: ${(p) => (p.$w ? u(p.$w) : 'auto')};
  padding-left: ${u(9)};
  padding-bottom: ${u(2)};
  border-bottom: 2px solid ${C.line};
  background: linear-gradient(#fefefe, #f4f4f4);
`;
const Tools = styled.div`
  display: flex;
  align-items: center;
  margin-left: ${(p) => u(p.$gap ?? 6)};
`;
const Tool = styled.button`
  display: grid;
  place-items: center;
  position: relative;
  flex: none;
  width: ${u(64)};
  height: ${u(62)};
  margin: 0 ${u(1)};
  padding: 0;
  border: 2px solid ${(p) => (p.$on ? '#acacac' : 'transparent')};
  border-radius: ${u(6)};
  background: ${(p) => (p.$on ? 'linear-gradient(#d9d9d9, #e3e3e3 12%, #e0e0e0)' : 'none')};
`;
const Separator = styled.span`
  flex: none;
  width: 2px;
  height: ${u(38)};
  margin: 0 ${u(6.5)};
  background: #dadada;
`;
const Arrow = styled.i`
  flex: none;
  width: 0;
  height: 0;
  margin: 0 ${(p) => u(p.$m ?? 0)};
  border: solid transparent;
  border-width: ${u(9)} ${u(8)} 0;
  border-top-color: #5c5c5c;
  ${(p) => p.$dir === 'right' && css`
    border-width: ${u(8)} 0 ${u(8)} ${u(9)};
    border-color: transparent transparent transparent #5c5c5c;
  `}
  ${(p) => p.$dir === 'left' && css`
    border-width: ${u(8)} ${u(9)} ${u(8)} 0;
    border-color: transparent #5c5c5c transparent transparent;
  `}
  ${(p) => p.$dir === 'up' && css`
    border-width: 0 ${u(8)} ${u(9)};
    border-color: transparent transparent #5c5c5c;
  `}
`;
const CornerArrow = styled(Arrow)`
  position: absolute;
  right: ${(p) => u(p.$x ?? 0)};
  bottom: ${(p) => u(p.$y ?? 0)};
  border-width: ${u(7)} ${u(6)} 0;
`;
const SecondRow = styled.div`
  display: flex;
  flex: none;
  height: ${u(34)};
  padding-left: ${u(9)};
  border-bottom: 2px solid ${C.line};
  background: linear-gradient(#fff, #f4f4f4);
`;

const toolbars = [
  { w: 427, items: ['newFile', 'openFile', 'save', 'newLayout', 'layoutManager', 'styleManager'] },
  { w: 494, items: ['dataSource', 'geopackage', 'newShape', 'newSpatialite', 'newVirtual', 'newMesh', 'newGpx'] },
  { w: 630, items: ['identify', 'abacus', '*gear', 'sigma', 'table', 'v', 'measure', 'v', '*mapTip', 'runAction', 'v'] },
  { w: 653, gap: 3, items: ['label', 'diagram', '|', 'labelPin', 'labelRed', '|', 'gPin', 'gEye', 'gMove', 'gRotate', 'gEdit'] },
  { w: 97, items: ['help'] },
  { items: ['pencils', 'pencil', 'saveEdits', 'digitize', 'v', 'addPolygon', 'vertexTool', 'v', 'editAttrs', 'trash', 'scissors', 'copy', 'paste', 'undo', 'redo'] },
];

const ToolItem = ({ item }) => {
  if (item === 'v') return <Arrow $m={4} />;
  if (item === '|') return <Separator />;
  const on = item[0] === '*';
  const name = on ? item.slice(1) : item;
  return (
    <Tool $on={on}>
      <Icon name={name} />
      {name === 'pencils' && <CornerArrow $x={4} $y={4} />}
    </Tool>
  );
};

/* ------------------------------------------------------------------ */
/* Workspace                                                           */
/* ------------------------------------------------------------------ */

const Workspace = styled.div`
  display: flex;
  flex: 1;
  min-height: 0;
`;

const SideBar = styled.div`
  display: flex;
  flex-direction: column;
  gap: 2px;
  flex: none;
  width: ${u(100)};
`;
const SideTools = styled.div`
  display: flex;
  flex-direction: column;
  align-items: ${(p) => (p.$wide ? 'flex-start' : 'center')};
  flex: ${(p) => (p.$wide ? '1' : 'none')};
  height: ${(p) => (p.$wide ? 'auto' : u(1055))};
  padding-top: ${u(10)};
  border-right: 2px solid ${C.line};
  background: linear-gradient(90deg, #fefefe, #f3f3f3);
  & > ${GripH} { align-self: center; margin: 0 0 ${u(4)} ${u(4)}; }
`;
const SideTool = styled(Tool)`
  width: ${u(62)};
  height: ${u(62)};
  margin: ${u(1)} 0 ${u(1)} ${u(4)};
`;
const SplitTool = styled.div`
  display: flex;
  align-items: center;
  height: ${u(64)};
  padding-left: ${u(16)};
  gap: ${u(12)};
`;

const DockColumn = styled.div`
  display: flex;
  flex-direction: column;
  flex: none;
  width: ${(p) => u(p.$w)};
  padding-left: ${(p) => u(p.$pl)};
`;
const DockHead = styled.div`
  display: flex;
  align-items: center;
  flex: none;
  height: ${u(40)};
  padding: 0 ${u(3)} 0 ${(p) => u(p.$pl ?? 7)};
  font-size: ${u(22)};
  letter-spacing: 0;
`;
const DockTitle = styled.span`
  flex: 1;
`;
const DockButton = styled.span`
  display: grid;
  place-items: center;
  width: ${u(22)};
  height: ${u(22)};
  margin-left: ${u(6)};
  border: 2px solid #707070;
  border-radius: ${u(5)};
`;
const DockTools = styled.div`
  display: flex;
  align-items: center;
  flex: none;
  height: ${(p) => u(p.$h)};
  padding-left: ${(p) => u(p.$pl ?? 14)};
  padding-bottom: ${u(3)};
`;
const DockTool = styled.span`
  display: grid;
  place-items: center;
  position: relative;
  width: ${(p) => u(p.$w ?? 50)};
`;

const dockButtons = (
  <>
    <DockButton>
      <Svg viewBox="0 0 24 24" $size={16}>
        <path d="M9,3H21V14H9ZM9,8H3V21H15V14" fill="none" stroke="#707070" strokeWidth="3" />
      </Svg>
    </DockButton>
    <DockButton>
      <Svg viewBox="0 0 24 24" $size={14}>
        <path d="M3,3L21,21M21,3L3,21" stroke="#606060" strokeWidth="6" />
      </Svg>
    </DockButton>
  </>
);

const Frame = styled.div`
  display: flex;
  flex-direction: column;
  min-height: 0;
  height: ${(p) => (p.$h ? u(p.$h) : 'auto')};
  flex: ${(p) => (p.$h ? 'none' : '1')};
  border: solid ${C.line};
  border-width: 2px 1px 2px 2px;
  background: #fff;
  overflow: hidden;
`;
const TreeArea = styled.div`
  display: grid;
  grid-template-columns: 1fr ${u(29)};
  flex: 1;
  min-height: 0;
`;
const TreeList = styled.div`
  overflow: hidden;
  min-width: 0;
`;
const TreeRow = styled.div`
  display: flex;
  align-items: center;
  height: ${(p) => u(p.$h ?? 36)};
  padding-left: ${(p) => u(p.$pad)};
  background: ${(p) => (p.$on ? '#dcdcdc' : 'none')};
  color: ${(p) => (p.$on ? '#000' : C.ink)};
  white-space: nowrap;
`;
const Twist = styled.span`
  display: grid;
  place-items: center;
  flex: none;
  width: ${u(20)};
  margin-right: ${(p) => u(p.$mr)};
`;
const TreeText = styled.span`
  margin-left: ${(p) => u(p.$ml)};
`;

const VScroll = styled.div`
  display: flex;
  flex-direction: column;
  border-left: 2px solid ${C.line};
  background: #ececec;
`;
const HScroll = styled.div`
  display: flex;
  flex: none;
  height: ${u(30)};
  border-top: 2px solid ${C.line};
  background: #ebebeb;
`;
const ScrollButton = styled.span`
  display: grid;
  place-items: center;
  flex: none;
  width: ${u(27)};
  height: ${u(27)};
  background: #fbfbfb;
`;
const VThumb = styled.span`
  height: ${u(440)};
  margin-top: ${u(30)};
  border: solid ${C.line};
  border-width: 2px 0;
  background: linear-gradient(90deg, #fff, #f6f6f6);
`;
const HThumb = styled.span`
  width: ${u(530)};
  border: solid ${C.line};
  border-width: 0 2px;
  background: linear-gradient(#fff, #f6f6f6);
`;
const Spacer = styled.span`
  flex: 1;
`;
const ScrollEnd = styled(ScrollButton)`
  border: 0 solid ${C.line};
  border-width: ${(p) => (p.$h ? '0 0 0 2px' : '2px 0 0')};
`;
const ScrollStart = styled(ScrollButton)`
  border-bottom: 2px solid ${C.line};
`;
const ScrollCorner = styled.span`
  width: ${u(29)};
  border-left: 2px solid ${C.line};
  background: #f3f3f3;
`;

const browser = [
  [0, 1, 'folderOpen', '/Volumes/Macintosh HD/Users/maples/Downlo'],
  [0, 1, 'folder', '/Volumes/Macintosh HD/Users/maples/GitHub'],
  [0, 2, 'folderOpen', '/Volumes/Macintosh HD/Users/maples/Scratch'],
  [1, 1, 'folder', 'Data'],
  [1, 1, 'folder', 'DemoScratch'],
  [1, 1, 'folder', 'Final Project Proposals'],
  [1, 1, 'folder', 'Fundamentals Planning'],
  [1, 1, 'folder', 'images'],
  [1, 2, 'folderOpen', 'Lab Walkthroughs'],
  [2, 1, 'folder', 'Week01'],
  [2, 1, 'folder', 'Week02'],
  [2, 1, 'folder', 'Week03'],
  [2, 1, 'folderOpen', 'Week04'],
  [2, 2, 'folderOpen', 'Week05'],
  [3, 2, 'folderOpen', 'ex01'],
  [4, 2, 'folderOpen', 'L9'],
  [5, 0, 'shp', 'Lakes.shp'],
  [5, 0, 'shp', 'Public.shp'],
  [5, 0, 'shp', 'roads.shp', true],
  [5, 1, 'shp', 'roadsBuffer300.shp'],
  [4, 1, 'qgis', 'EX01 - Buffer Suitability Analysis'],
  [1, 1, 'folder', 'Pantanal'],
  [1, 1, 'folder', 'Tomlin-Browns Pond'],
  [1, 1, 'folder', 'Week 02'],
  [1, 1, 'folder', 'Week 03'],
  [1, 1, 'folder', 'Week 04'],
  [1, 1, 'folder', 'Week 05'],
  [1, 1, 'folder', 'Week 06'],
];

const toolbox = [
  [0, 1, 'clock', 'Recently used'],
  [0, 2, 'qgis', 'Vector geometry'],
  [1, 0, 'buffer', 'Buffer', true],
  [1, 0, 'gear', 'Create wedge buffers'],
  [1, 0, 'gear', 'Multi-ring buffer (constant distance)'],
  [1, 0, 'shapes', 'Rectangles,ovals,diamonds'],
  [1, 0, 'gear', 'Single sided buffer'],
  [1, 0, 'gear', 'Tapered buffers'],
  [1, 0, 'gear', 'Variable width buffer (by M value)'],
  [0, 2, 'qgis', 'Vector selection'],
  [1, 0, 'gear', 'Extract within distance'],
  [1, 0, 'selectWithin', 'Select within distance'],
  [0, 2, 'gdal', 'GDAL'],
  [1, 2, null, 'Vector geoprocessing'],
  [2, 0, 'gdal', 'Buffer vectors'],
  [2, 0, 'gdal', 'One side buffer'],
  [0, 2, 'grass', 'GRASS'],
  [1, 2, null, 'Raster (r.*)'],
  [2, 0, 'grass', 'r.buffer'],
  [2, 0, 'grass', 'r.buffer.lowmem'],
  [1, 2, null, 'Vector (v.*)'],
  [2, 0, 'grass', 'v.buffer'],
  [0, 2, 'saga', 'SAGA Next Gen'],
  [1, 2, null, 'Raster tools'],
  [2, 0, 'saga', 'Raster buffer'],
  [2, 0, 'saga', 'Raster proximity buffer'],
  [2, 0, 'saga', 'Threshold raster buffer'],
  [1, 2, null, 'Vector general'],
  [2, 0, 'saga', 'Shapes buffer'],
  [0, 2, 'cube', 'WhiteboxTools'],
  [1, 2, null, 'GIS Analysis - Distance Tools'],
  [2, 0, 'cube', 'BufferRaster'],
];

const Tree = ({ rows, base, indent, mr, icon, ml }) =>
  rows.map(([level, twist, name, text, on]) => (
    <TreeRow key={level + text} $pad={base + level * indent} $on={on} $h={name ? 36 : 32}>
      <Twist $mr={mr}>{twist > 0 && <Arrow $dir={twist === 1 ? 'right' : 'down'} />}</Twist>
      {name && <Icon name={name} size={icon} />}
      <TreeText $ml={name ? ml : 2}>{text}</TreeText>
    </TreeRow>
  ));

const SplitterH = styled.div`
  display: grid;
  place-items: center;
  flex: none;
  height: ${u(11)};
`;
const SplitterV = styled.div`
  display: grid;
  align-items: center;
  justify-items: center;
  flex: none;
  width: ${u(13)};
`;
const SplitGrip = styled.span`
  width: ${(p) => (p.$v ? '2px' : u(34))};
  height: ${(p) => (p.$v ? u(34) : '2px')};
  background-image: linear-gradient(${(p) => (p.$v ? '180deg' : '90deg')}, #bdbdbd 40%, transparent 40%);
  background-size: ${(p) => (p.$v ? `100% ${u(6)}` : `${u(6)} 100%`)};
`;

const LayerRow = styled.div`
  display: flex;
  align-items: center;
  flex: none;
  height: ${u(36)};
  padding-left: ${u(45)};
  font-weight: 700;
  letter-spacing: 0.004em;
  color: ${(p) => (p.$on ? '#fdeedd' : C.ink)};
  background: ${(p) => (p.$on ? `linear-gradient(#c45c00, ${C.orange} 20%, #b85100)` : 'none')};
`;
const Check = styled.span`
  display: grid;
  place-items: center;
  flex: none;
  width: ${u(27)};
  height: ${u(27)};
  border: 2px solid #b8b8b8;
  border-radius: ${u(2)};
  background: #fff;
`;
const LineSwatch = styled.span`
  width: ${u(32)};
  height: 2px;
  margin: 0 ${u(12)} 0 ${u(13)};
  background: #ad7a66;
`;
const FillSwatch = styled.span`
  width: ${u(32)};
  height: ${u(33)};
  margin: 0 ${u(12)} 0 ${u(13)};
  border: 1px solid #33402c;
  background: #85b66f;
`;
const LayerName = styled.span`
  line-height: 1.04;
  border-bottom: 2px solid ${(p) => (p.$on ? '#fdeedd' : 'transparent')};
`;
const CheckMark = () => (
  <Svg viewBox="0 0 24 24" $size={22}>
    <path d="M4.4,11.6 L10,20.6 L19.6,2.6" fill="none" stroke="#1c1c1c" strokeWidth="3" />
  </Svg>
);

/* ------------------------------------------------------------------ */
/* Map: roads digitised on four sheets, buffered by a fixed distance   */
/* ------------------------------------------------------------------ */

const sheets = [
  {
    x: 960, y: 500, sx: 0.7334, sy: 0.6059,
    lines: [
      '162,176 161,449', '135,447 162,450 476,443 1063,447 1507,449', '135,447 136,1568',
      '526,173 516,207 511,233 510,245 476,443 471,482 286,1568',
      '471,482 514,481 543,481 543,444', '514,444 514,481', '1172,179 1174,448',
      '1507,179 1507,984 1509,988 1516,990 1568,991', '1063,447 1062,856',
      '1507,856 1042,856 1036,860 1030,867 1025,876 941,1040 932,1053 921,1067 879,1103 871,1112 864,1123 796,1249 791,1255 784,1260 776,1262 706,1260 698,1262 651,1303 614,1323 604,1325 530,1332 508,1348 487,1357 465,1371 453,1377 429,1384 425,1389 407,1398 390,1400 341,1401 272,1402 212,1403',
      '334,1287 372,1285 376,1292 375,1426 342,1430 340,1402', '321,1360 376,1358 427,1359 430,1363 429,1384',
      '427,1359 485,1336 487,1357', '292,1356 289,1402', '212,1403 212,1535', '272,1402 272,1501', '212,1465 272,1464',
      '242,1465 242,1535', '212,1501 298,1501', '137,1511 162,1535 291,1536',
      '453,1377 459,1391 467,1407 489,1437 497,1449 497,1470 499,1531 610,1535 674,1538 678,1525', '610,1535 610,1568',
      '1284,856 1284,1412 1286,1442 1292,1471 1284,1500 1284,1568', '1284,1398 1568,1399',
      '1367,1399 1366,1510 1362,1541 1358,1568',
    ],
  },
  {
    x: 2050, y: 500, sx: 0.7207, sy: 0.6059,
    lines: [
      '83,992 150,993 157,999 162,1006 161,1129 153,1568', '474,183 475,1134',
      '161,1129 682,1137 702,1131 718,1130 752,1131 787,1135 802,1141 825,1153 833,1152 849,1147 911,1138 929,1143',
      '929,1016 928,1568', '83,1399 157,1399', '968,190 967,254', '945,254 1033,254 1035,190',
      '1262,194 1289,316 1290,350 1306,605 1336,729 1340,738 1390,822 1405,849 1420,901', '1390,822 1386,845 1393,918 1413,974',
    ],
  },
  {
    x: 960, y: 1400, sx: 0.7334, sy: 0.5867,
    lines: [
      '136,85 137,1172 224,1173 227,1150', '286,85 137,984', '264,211 292,213 304,215 327,216 328,256 257,257', '305,256 305,331',
      '328,256 333,260 335,270 335,331',
      '137,332 160,330 245,330 342,331 352,337 387,370 605,534 622,545 639,552 689,545 706,540 720,532 790,482 804,473 815,471 1230,473 1264,464 1279,437 1283,420 1283,381 1286,362 1292,351 1303,340 1315,332 1350,326 1357,329 1376,329 1420,332 1568,334',
      '610,85 610,325 608,360 606,400 604,1362 600,1384 590,1403',
      '605,752 909,752 960,780 982,789 1002,793 1104,799 1278,795 1300,788 1326,776 1352,767 1380,761 1446,749 1500,754 1568,755',
      '137,893 370,893 424,888 447,877 476,862 506,863 546,867 565,863 605,847', '162,1173 265,1345 268,1404',
      '605,1173 1060,1175 1120,1172 1221,1176 1310,1181', '1167,798 1164,915 1166,980 1175,988 1202,996 1219,1008 1223,1020 1221,1176',
      '1279,437 1284,457 1278,795', '1284,85 1284,335 1286,344 1292,351', '1284,231 1342,233',
      '1358,85 1369,124 1366,160 1359,195 1353,214 1345,223 1342,233 1341,253 1342,285 1347,303 1350,326',
      '1380,896 1356,898 1353,902 1348,916 1338,930 1321,946 1303,975 1289,1008 1281,1040 1278,1065 1279,1080 1287,1112 1297,1128 1310,1140 1330,1148 1332,1153 1329,1161 1316,1173 1310,1181 1338,1200 1355,1217 1358,1232 1366,1255 1370,1270 1382,1276 1396,1276 1406,1280 1397,1294 1390,1310 1387,1333 1385,1406',
      '1406,1280 1413,1273 1427,1264 1457,1253 1490,1242 1502,1239 1568,1219',
      '1500,754 1502,895 1492,921 1499,958 1500,970 1506,995 1507,1013 1500,1042 1501,1239', '1490,1242 1489,1280 1491,1296 1495,1308 1497,1318',
    ],
  },
  {
    x: 2050, y: 1400, sx: 0.7207, sy: 0.5867,
    lines: [
      '153,85 152,146 148,159 137,174 133,187 134,334', '83,334 134,335 160,336 182,342 197,362 203,378 240,590 240,690 239,720 240,755 83,755',
      '240,755 242,770 242,898', '182,342 192,336 206,333 700,333 714,336 735,377 748,385 808,388 882,417 895,420 928,432', '928,85 923,902',
      '928,203 1058,212 1075,225 1089,242 1099,262 1135,619 1166,718 1169,740 1175,773 1260,977 1288,1019 1321,1040 1395,1041',
      '1420,810 1401,850 1395,893 1395,1369 1409,1401',
      '799,749 819,760 836,780 873,797 880,816 884,866 892,890 902,900 923,900 1040,901 1037,1005 1010,1008',
      '923,900 911,933 893,970 880,988 848,1018 828,1044 819,1072 811,1130 812,1317',
      '126,1213 128,896 242,898 551,899 569,916 582,939 583,950 581,1275 584,1293 601,1318',
      '83,1219 100,1214 126,1213 159,1226 181,1245 230,1310 253,1321 308,1321 1062,1316 1225,1293 1284,1265 1303,1262 1318,1264 1350,1271 1395,1280',
      '222,1302 215,1324 212,1349 208,1360 189,1399', '286,1211 273,1214 271,1239 261,1261 260,1321', '754,1318 754,1403',
    ],
  },
];

const roads = sheets
  .flatMap(({ x, y, sx, sy, lines }) =>
    lines.map((line) => 'M' + line.split(' ').map((p) => {
      const [a, b] = p.split(',').map(Number);
      return `${(x + a * sx).toFixed(1)},${(y + b * sy).toFixed(1)}`;
    }).join('L'))
  )
  .join('');

const BUFFER = 123;

const MapFrame = styled.section`
  position: relative;
  flex: 1;
  border: solid ${C.line};
  border-width: 2px 1px 2px 2px;
  background: #fff;
`;
const MapSvg = styled.svg`
  display: block;
  width: 100%;
  height: 100%;
`;
const MapLabel = styled.span`
  position: absolute;
  left: ${u(1090)};
  top: ${u(1086)};
  display: grid;
  place-items: center;
  width: ${u(40)};
  height: ${u(64)};
  border: 2px solid #000;
  background: #fff;
  color: #000;
  font-family: 'Open Sans', sans-serif;
  font-size: ${u(38)};
  line-height: 1;
`;

const MapCanvas = () => (
  <MapFrame>
    <MapSvg viewBox="943.5 245.5 2243.5 2337" preserveAspectRatio="none" fill="none" strokeLinecap="round" strokeLinejoin="round">
      <path d={roads} stroke="#232323" strokeWidth={BUFFER + 1.6} />
      <path d={roads} stroke="#85b66f" strokeWidth={BUFFER - 1.8} />
      <path d={roads} stroke="#9c4f30" strokeWidth="1.5" />
    </MapSvg>
    <MapLabel>1</MapLabel>
  </MapFrame>
);

/* ------------------------------------------------------------------ */
/* Search field and status bar                                         */
/* ------------------------------------------------------------------ */

const Field = styled.div`
  display: flex;
  align-items: center;
  flex: none;
  width: ${(p) => (p.$w ? u(p.$w) : 'auto')};
  height: ${(p) => u(p.$h ?? 45)};
  margin-left: ${(p) => u(p.$ml ?? 0)};
  padding-left: ${(p) => u(p.$pl ?? 7)};
  border: 2px solid #acacac;
  border-radius: ${u(5)};
  background: linear-gradient(#efefef, #fff 8%);
  color: ${(p) => (p.$dim ? '#6e6e6e' : C.ink)};
  overflow: hidden;
`;
const FieldText = styled.span`
  flex: 1;
  margin-left: ${(p) => u(p.$ml ?? 0)};
`;
const ClearBox = styled.svg`
  width: ${u(27)};
  height: ${u(21)};
  margin-right: ${u(14)};
`;
const Status = styled.footer`
  display: flex;
  align-items: center;
  flex: none;
  height: ${u(62)};
  padding: ${u(2)} ${u(14)} 0 ${u(9)};
  font-size: ${u(22)};
  letter-spacing: 0;
  color: #111;
`;
const Label = styled.span`
  margin-left: ${(p) => u(p.$ml ?? 0)};
  letter-spacing: ${(p) => (p.$wide ? '0.012em' : '0')};
  white-space: nowrap;
`;
const Slot = styled.span`
  display: grid;
  place-items: center;
  margin-left: ${(p) => u(p.$ml ?? 0)};
`;
const Stepper = styled.span`
  display: flex;
  flex-direction: column;
  align-items: center;
  justify-content: center;
  gap: ${u(10)};
  align-self: stretch;
  width: ${(p) => u(p.$w)};
  border-left: 2px solid #c4c4c4;
  background: linear-gradient(#fdfdfd, #f1f1f1);
`;
const Hint = styled.span`
  font-size: ${u(26)};
  letter-spacing: -0.006em;
  margin-left: ${u(13)};
`;
const Numbers = styled.span`
  font-size: ${u(23.4)};
  color: #333;
`;

const StatusBar = () => (
  <Status>
    <Field $w={427} $dim $pl={17}>
      <Icon name="search" size={24} />
      <Hint>Type to locate (⌘K)</Hint>
    </Field>
    <Spacer />
    <Label>Coordinate</Label>
    <Field $w={205} $ml={8}><Numbers>504591,5001181</Numbers></Field>
    <Slot $ml={9}><Icon name="extents" size={28} /></Slot>
    <Label $ml={29}>Scale</Label>
    <Field $w={186} $h={48} $ml={7} $pl={5}>
      <FieldText>1:27688</FieldText>
      <Stepper $w={42}><Arrow /></Stepper>
    </Field>
    <Slot $ml={21}><Icon name="lock" size={29} /></Slot>
    <Label $ml={17}>Magnifier</Label>
    <Field $w={186} $h={46} $ml={8}>
      <FieldText>100%</FieldText>
      <Stepper $w={30}><Arrow $dir="up" /><Arrow /></Stepper>
    </Field>
    <Label $ml={18}>Rotation</Label>
    <Field $w={186} $h={45} $ml={19}>
      <FieldText>0.0 °</FieldText>
      <Stepper $w={30}><Arrow $dir="up" /><Arrow /></Stepper>
    </Field>
    <Slot $ml={12}><Check><CheckMark /></Check></Slot>
    <Label $ml={11}>Render</Label>
    <Slot $ml={32}><Icon name="globe" size={29} /></Slot>
    <Label $ml={5} $wide>EPSG:26915</Label>
    <Slot $ml={49}><Icon name="bubble" size={32} /></Slot>
  </Status>
);

export default function App() {
  return (
    <Desktop>
      <GlobalStyle />
      <Window>
        <TitleBar>
          <Lights>
            <Light $c="#dc2c20" />
            <Light $c="#976b21" />
            <Light $c="#3a8a24" />
          </Lights>
          <WindowTitle>*EX01 - Buffer Suitability Analysis — QGIS [Earthsys 2025]</WindowTitle>
        </TitleBar>

        <ToolbarRow>
          {toolbars.map(({ w, gap, items }, i) => (
            <Toolbar key={i} $w={w}>
              <GripV />
              <Tools $gap={gap}>{items.map((item, k) => <ToolItem key={k} item={item} />)}</Tools>
            </Toolbar>
          ))}
        </ToolbarRow>
        <SecondRow><GripV $len={34} /></SecondRow>

        <Workspace>
          <SideBar>
            <SideTools>
              <GripH />
              {['*pan', 'panSelection', 'zoomIn', 'zoomOut', 'zoomFull', 'zoomSelection', 'zoomLayer', 'zoomNative', 'zoomLast', 'zoomNext', 'newMap', 'new3d', 'newBookmark', 'bookmarks', 'temporal', 'refresh'].map((n) => (
                <SideTool key={n} $on={n[0] === '*'}><Icon name={n.replace('*', '')} /></SideTool>
              ))}
            </SideTools>
            <SideTools $wide>
              <GripH />
              {['select', 'selectValue', 'deselect', 'selectLocation'].map((n) => (
                <SplitTool key={n}><Icon name={n} /><Arrow /></SplitTool>
              ))}
            </SideTools>
          </SideBar>

          <DockColumn $w={716} $pl={3}>
            <DockHead><DockTitle>Browser</DockTitle>{dockButtons}</DockHead>
            <DockTools $h={61} $pl={7}>
              {['addItem', 'refresh', 'filter', 'collapse', 'info'].map((n) => (
                <DockTool key={n}><Icon name={n} size={31} /></DockTool>
              ))}
            </DockTools>
            <Frame $h={1032}>
              <TreeArea>
                <TreeList><Tree rows={browser} base={38} indent={32} mr={14} icon={29} ml={12} /></TreeList>
                <VScroll>
                  <ScrollStart><Arrow $dir="up" /></ScrollStart>
                  <VThumb />
                  <Spacer />
                  <ScrollEnd><Arrow /></ScrollEnd>
                </VScroll>
              </TreeArea>
              <HScroll>
                <ScrollButton><Arrow $dir="left" /></ScrollButton>
                <HThumb />
                <Spacer />
                <ScrollEnd $h><Arrow $dir="right" /></ScrollEnd>
                <ScrollCorner />
              </HScroll>
            </Frame>
            <SplitterH><SplitGrip /></SplitterH>
            <DockHead><DockTitle>Layers</DockTitle>{dockButtons}</DockHead>
            <DockTools $h={61} $pl={7}>
              <DockTool><Icon name="styling" size={31} /></DockTool>
              <DockTool><Icon name="addGroup" size={31} /></DockTool>
              <DockTool><Icon name="eye" size={31} /><CornerArrow $x={4} $y={-3} /></DockTool>
              <DockTool><Icon name="filter" size={31} /><CornerArrow $x={4} $y={-3} /></DockTool>
              <DockTool><Icon name="expression" size={31} /></DockTool>
              <DockTool $w={20}><Arrow /></DockTool>
              <DockTool $w={54}><Icon name="expand" size={31} /></DockTool>
              <DockTool><Icon name="collapse" size={31} /></DockTool>
              <DockTool><Icon name="removeLayer" size={31} /></DockTool>
            </DockTools>
            <Frame>
              <LayerRow><Check><CheckMark /></Check><LineSwatch /><LayerName>roads</LayerName></LayerRow>
              <LayerRow $on><Check><CheckMark /></Check><FillSwatch /><LayerName $on>roadsBuffer300</LayerName></LayerRow>
            </Frame>
          </DockColumn>

          <SplitterV><SplitGrip $v /></SplitterV>
          <MapCanvas />
          <SplitterV><SplitGrip $v /></SplitterV>

          <DockColumn $w={1023} $pl={0}>
            <DockHead $pl={9}><DockTitle>Processing Toolbox</DockTitle>{dockButtons}</DockHead>
            <DockTools $h={62} $pl={7}>
              <DockTool><Icon name="models" size={32} /><CornerArrow $x={4} $y={-3} /></DockTool>
              <DockTool><Icon name="python" size={31} /><CornerArrow $x={4} $y={-3} /></DockTool>
              <DockTool><Icon name="history" size={32} /></DockTool>
              <DockTool><Icon name="results" size={31} /></DockTool>
              <Separator />
              <DockTool><Icon name="editInPlace" size={31} /></DockTool>
              <Separator />
              <DockTool><Icon name="wrench" size={32} /></DockTool>
            </DockTools>
            <Field $pl={14} $h={47}>
              <Icon name="search" size={27} />
              <FieldText $ml={14}>Buffer</FieldText>
              <ClearBox viewBox="0 0 27 21">
                <path d="M8,0H27V21H8L0,10.5Z" fill="#8e8e8e" />
                <path d="M11.5,4.5L20.5,16.5M20.5,4.5L11.5,16.5" stroke="#fff" strokeWidth="2.2" />
              </ClearBox>
            </Field>
            <Frame>
              <TreeList><Tree rows={toolbox} base={11} indent={40} mr={16} icon={30} ml={13} /></TreeList>
            </Frame>
          </DockColumn>
        </Workspace>
        <StatusBar />
      </Window>
    </Desktop>
  );
}
